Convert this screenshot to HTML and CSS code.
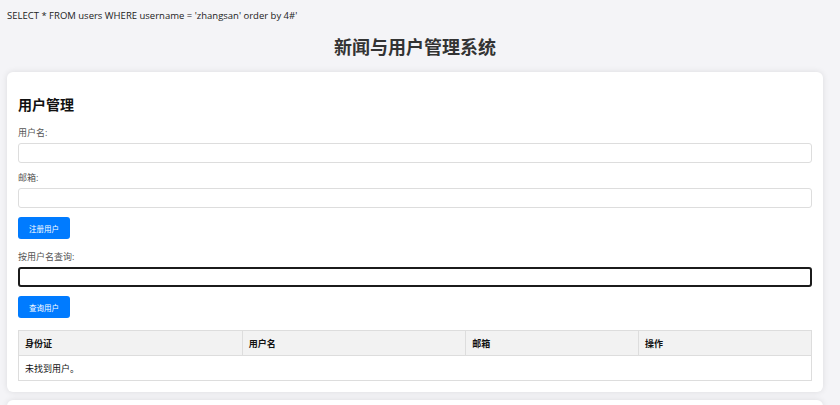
FILE: index.html
```html
<!DOCTYPE html>
<html>
<head>
    <meta charset="utf-8">
    <link rel="stylesheet" href="styles.css">
</head>
<body>
    <div class="sql-line">SELECT * FROM users WHERE username = 'zhangsan' order by 4#'</div>
    <h1 class="title">新闻与用户管理系统</h1>

    <div class="card">
        <h2>用户管理</h2>
        <div class="form-group">
            <label for="username">用户名:</label>
            <input type="text" id="username">
        </div>
        <div class="form-group">
            <label for="email">邮箱:</label>
            <input type="text" id="email">
        </div>
        <button class="btn">注册用户</button>

        <div class="form-group search-group">
            <label for="searchName">按用户名查询:</label>
            <input type="text" id="searchName" class="focused">
        </div>
        <button class="btn">查询用户</button>

        <table class="data-table">
            <thead>
                <tr>
                    <th class="col-wide">身份证</th>
                    <th class="col-wide">用户名</th>
                    <th>邮箱</th>
                    <th>操作</th>
                </tr>
            </thead>
            <tbody>
                <tr>
                    <td colspan="4">未找到用户。</td>
                </tr>
            </tbody>
        </table>
    </div>

    <div class="card">
        <h2>新闻管理</h2>
        <div class="form-group">
            <label for="newsTitle">标题:</label>
            <input type="text" id="newsTitle">
        </div>
        <div class="form-group">
            <label for="newsContent">内容:</label>
            <textarea id="newsContent"></textarea>
        </div>
        <button class="btn">发布新闻</button>

        <table class="data-table">
            <thead>
                <tr>
                    <th class="col-wide">编号</th>
                    <th class="col-wide">标题</th>
                    <th>作者</th>
                    <th>操作</th>
                </tr>
            </thead>
            <tbody>
                <tr>
                    <td colspan="4">暂无新闻。</td>
                </tr>
            </tbody>
        </table>
    </div>
</body>
</html>
```

FILE: styles.css
```css
html {
    overflow-y: scroll;
}

html::-webkit-scrollbar {
    width: 8px;
}

html::-webkit-scrollbar-track {
    background: #f1f1f1;
}

html::-webkit-scrollbar-thumb {
    background: #7d7d7d;
    border-radius: 4px;
}

body {
    margin: 0;
    padding: 9px 17px 20px 7px;
    background-color: #f4f4f7;
    color: #222;
    font-family: "Open Sans", "Noto Sans CJK SC", sans-serif;
}

.sql-line {
    font-size: 9.5px;
    line-height: 14px;
    color: #222;
}

.title {
    margin: 12px 0 13px;
    font-size: 18px;
    line-height: 24px;
    font-weight: bold;
    color: #333;
    text-align: center;
}

.card {
    background: #fff;
    border-radius: 6px;
    box-shadow: 0 0 6px rgba(0, 0, 0, 0.1);
    padding: 12px 11px 11px;
    margin-bottom: 8px;
}

.card h2 {
    margin: 11px 0 12px;
    font-size: 14px;
    line-height: 20px;
    font-weight: bold;
    color: #111;
}

.form-group {
    margin-bottom: 9px;
}

.form-group label {
    display: block;
    font-size: 9px;
    line-height: 12px;
    color: #555;
    margin-bottom: 4px;
}

.form-group input,
.form-group textarea {
    display: block;
    width: 100%;
    height: 20px;
    box-sizing: border-box;
    border: 1px solid #ddd;
    border-radius: 3px;
    padding: 2px 6px;
    font-size: 9px;
    font-family: inherit;
    outline: none;
}

.form-group textarea {
    height: 60px;
    resize: none;
}

.form-group input.focused {
    border: 2px solid #1b1b1b;
}

.search-group {
    margin-top: 12px;
}

.btn {
    display: block;
    height: 22px;
    padding: 0 11px;
    background: #007bff;
    border: none;
    border-radius: 3px;
    color: #fff;
    font-family: inherit;
    font-size: 7.5px;
    cursor: pointer;
}

.btn:hover {
    background: #0069d9;
}

.data-table {
    width: 100%;
    margin-top: 12px;
    border-collapse: collapse;
    font-size: 9px;
}

.data-table th,
.data-table td {
    height: 25px;
    box-sizing: border-box;
    border: 1px solid #ddd;
    padding: 0 6px;
    text-align: left;
    color: #111;
}

.data-table th {
    background: #f2f2f2;
    font-weight: bold;
    width: 21.8%;
}

.data-table th.col-wide {
    width: 28.2%;
}
```
